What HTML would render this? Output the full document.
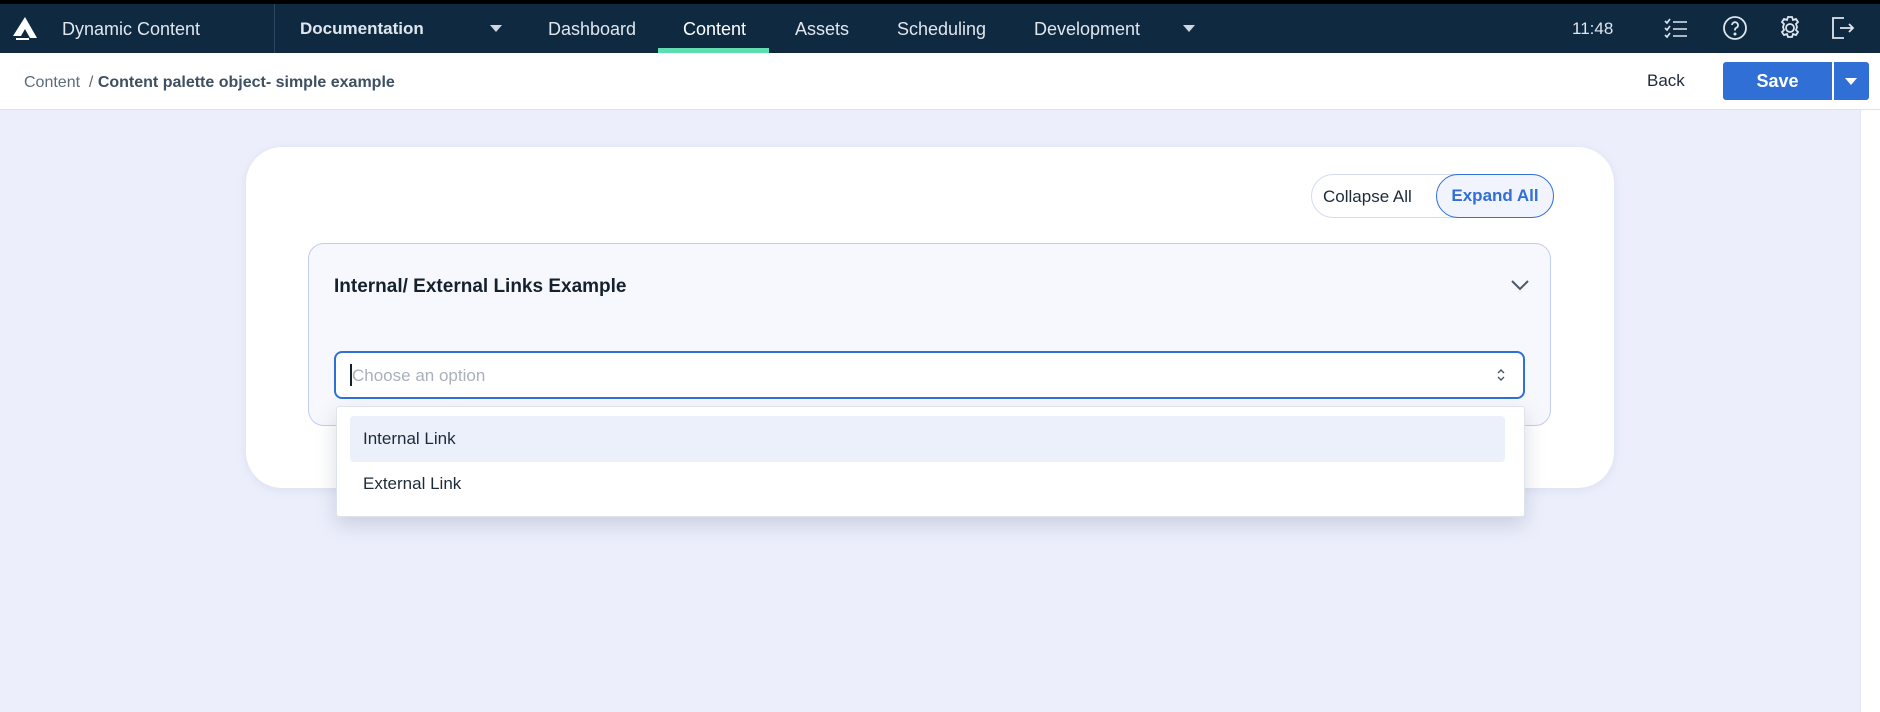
<!DOCTYPE html>
<html><head><meta charset="utf-8"><style>
*{box-sizing:border-box;margin:0;padding:0}
body{width:1880px;height:712px;overflow:hidden;background:#eceffb;font-family:"Liberation Sans",sans-serif;position:relative}
.abs{position:absolute}
.top{left:0;top:0;width:1880px;height:4px;background:#000}
.nav{left:0;top:4px;width:1880px;height:49px;background:#0f2a40;color:#dfe6ee;font-size:18px}
.nav span{position:absolute;top:15px;white-space:nowrap}
.sub{left:0;top:53px;width:1880px;height:57px;background:#fff;border-bottom:1px solid #dde2f2}
.tri{width:0;height:0;border-left:6px solid transparent;border-right:6px solid transparent;border-top:7px solid #cfd8e2;position:absolute}
</style></head><body>
<div class="abs top"></div>
<div class="abs nav">
 <svg class="abs" style="left:12px;top:12px" width="26" height="24" viewBox="0 0 26 24"><path d="M13 1 L25 22 L18 22 L13 13 L9 20 L1 20 Z" fill="#fff"/><path d="M4 23 L17 23" stroke="#fff" stroke-width="2"/></svg>
 <span style="left:62px">Dynamic Content</span>
 <div class="abs" style="left:274px;top:0;width:1px;height:49px;background:#2c4760"></div>
 <span style="left:300px;font-weight:bold;font-size:17px">Documentation</span>
 <div class="tri" style="left:490px;top:21px"></div>
 <span style="left:548px">Dashboard</span>
 <span style="left:683px;color:#fff">Content</span>
 <div class="abs" style="left:658px;top:44px;width:111px;height:5px;background:#5fdcb0"></div>
 <span style="left:795px">Assets</span>
 <span style="left:897px">Scheduling</span>
 <span style="left:1034px">Development</span>
 <div class="tri" style="left:1183px;top:21px"></div>
 <span style="left:1572px;font-size:17px">11:48</span>
 <svg class="abs" style="left:1663px;top:13px" width="26" height="24" viewBox="0 0 26 24" fill="none" stroke="#dfe6ee" stroke-width="1.6"><path d="M2 4l2 2 3-4M2 11l2 2 3-4M2 18l2 2 3-4M10 5h14M10 12h14M10 19h14"/></svg>
 <svg class="abs" style="left:1722px;top:11px" width="26" height="26" viewBox="0 0 26 26" fill="none" stroke="#dfe6ee" stroke-width="1.8"><circle cx="13" cy="13" r="11"/><path d="M10 10a3 3 0 1 1 4 3c-1 .5-1 1-1 2.5"/><circle cx="13" cy="19" r=".6" fill="#dfe6ee"/></svg>
 <svg class="abs" style="left:1777px;top:11px" width="26" height="26" viewBox="0 0 26 26" fill="none" stroke="#dfe6ee" stroke-width="1.8"><circle cx="13" cy="13" r="4"/><path d="M11 2h4l1 3 3-1 2 3-2 2 1 3-1 3 2 2-2 3-3-1-1 3h-4l-1-3-3 1-2-3 2-2-1-3 1-3-2-2 2-3 3 1z"/></svg>
 <svg class="abs" style="left:1830px;top:11px" width="26" height="26" viewBox="0 0 26 26" fill="none" stroke="#dfe6ee" stroke-width="1.8"><path d="M14 3H3v20h11M10 13h13M19 9l4 4-4 4"/></svg>
</div>
<div class="abs sub">
 <div class="abs" style="left:24px;top:21px;font-size:16px;color:#5d6b7a;white-space:nowrap">Content &nbsp;/ <b style="color:#3d4f60">Content palette object- simple example</b></div>
 <div class="abs" style="left:1647px;top:18px;font-size:17px;color:#1d2b38">Back</div>
 <div class="abs" style="left:1723px;top:9px;width:109px;height:38px;background:#2f6fd6;border-radius:3px 0 0 3px;color:#fff;font-weight:bold;font-size:18px;text-align:center;line-height:38px">Save</div>
 <div class="abs" style="left:1834px;top:9px;width:35px;height:38px;background:#2f6fd6;border-radius:0 3px 3px 0"><div class="tri" style="left:11px;top:16px;border-top-color:#fff"></div></div>
</div>
<div class="abs" style="left:1860px;top:110px;width:20px;height:602px;background:#fff;border-left:1px solid #e3e6ee"></div>
<div class="abs" style="left:246px;top:147px;width:1368px;height:341px;background:#fff;border-radius:36px;box-shadow:0 2px 10px rgba(120,130,180,.15)"></div>
<div class="abs" style="left:1311px;top:174px;width:243px;height:44px;border:1px solid #d4daf0;border-radius:22px;background:#fff"></div>
<div class="abs" style="left:1323px;top:187px;font-size:17px;color:#1d2b38">Collapse All</div>
<div class="abs" style="left:1436px;top:174px;width:118px;height:44px;border:1.5px solid #2f6fd6;border-radius:22px;background:#f1f4fc;color:#2f6fd6;font-weight:bold;font-size:17px;text-align:center;line-height:41px">Expand All</div>
<div class="abs" style="left:308px;top:243px;width:1243px;height:183px;background:#f7f8fd;border:1px solid #c4cdf2;border-radius:16px"></div>
<div class="abs" style="left:334px;top:276px;font-size:19px;font-weight:bold;color:#15222e">Internal/ External Links Example</div>
<svg class="abs" style="left:1510px;top:279px" width="20" height="12" viewBox="0 0 20 12" fill="none" stroke="#4a5866" stroke-width="2"><path d="M2 2l8 8 8-8"/></svg>
<div class="abs" style="left:334px;top:351px;width:1191px;height:48px;background:#fff;border:2px solid #2f6fd6;border-radius:8px"></div>
<div class="abs" style="left:350px;top:364px;width:2px;height:22px;background:#15222e"></div>
<div class="abs" style="left:352px;top:366px;font-size:17px;color:#a9b1bb">Choose an option</div>
<svg class="abs" style="left:1496px;top:366px" width="10" height="18" viewBox="0 0 10 18" fill="none" stroke="#4a5866" stroke-width="1.4"><path d="M2 7l3-3 3 3M2 11l3 3 3-3"/></svg>
<div class="abs" style="left:336px;top:406px;width:1189px;height:111px;background:#fff;border:1px solid #dfe3ee;border-radius:3px;box-shadow:0 8px 20px rgba(80,90,130,.22)"></div>
<div class="abs" style="left:350px;top:416px;width:1155px;height:46px;background:#ecf0fb;border-radius:4px"></div>
<div class="abs" style="left:363px;top:429px;font-size:17px;color:#1d2b38">Internal Link</div>
<div class="abs" style="left:363px;top:474px;font-size:17px;color:#1d2b38">External Link</div>
</body></html>
